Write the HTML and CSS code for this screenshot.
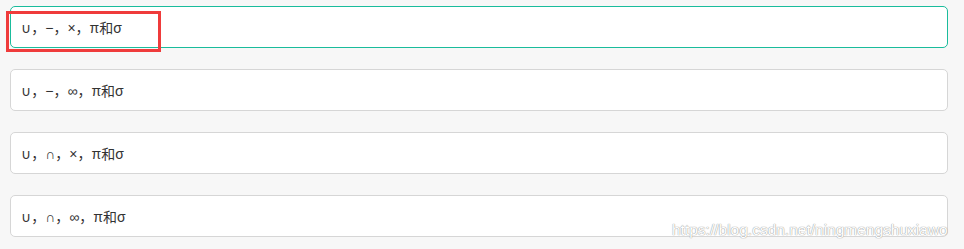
FILE: index.html
```html
<!DOCTYPE html>
<html>
  <head>
    <link rel="stylesheet" href="styles.css">
  </head>
  <body>
    <div class="list">
      <div class="option active">∪，−，×，π和σ</div>
      <div class="option">∪，−，∞，π和σ</div>
      <div class="option">∪，∩，×，π和σ</div>
      <div class="option">∪，∩，∞，π和σ</div>
    </div>

    <!-- marca roja de la captura -->
    <div class="highlight"></div>

    <div class="watermark">https://blog.csdn.net/ningmengshuxiawo</div>
  </body>
</html>
```

FILE: styles.css
```css
body {
  background-color: #f7f7f7;
  margin: 0;
  padding: 6px 16px 0 10px;
  font-family: "Liberation Sans", "DejaVu Sans", "Noto Sans CJK SC", sans-serif;
  color: #333;
}

.list {
  display: flex;
  flex-direction: column;
  gap: 21px;
}

.option {
  box-sizing: border-box;
  height: 42px;
  display: flex;
  align-items: center;
  padding: 0 10px;
  background-color: #fff;
  border: 1px solid #d6d6d6;
  border-radius: 5px;
  font-size: 14px;
}

.option.active {
  border-color: #1abc9c;
}

.highlight {
  position: absolute;
  left: 6px;
  top: 11px;
  width: 149px;
  height: 35px;
  border: 3px solid #ef3b3b;
}

.watermark {
  position: absolute;
  left: 672px;
  top: 221px;
  font-family: "Liberation Sans", Arial, sans-serif;
  font-size: 15.5px;
  color: #fff;
  text-shadow: 0 0 1px #999, 0 0 1px #999;
}
```
